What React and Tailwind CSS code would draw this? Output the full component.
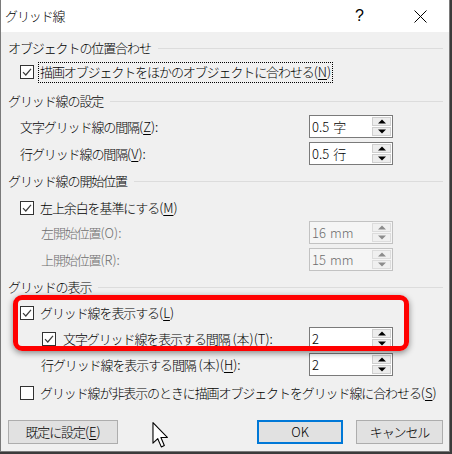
import React from "react";

const FONT = { fontFamily: '"Noto Sans CJK JP", "Noto Sans", sans-serif' };

function Check({ checked = true }) {
  return (
    <div className="w-[14px] h-[14px] border border-[#333333] bg-white flex items-center justify-center shrink-0">
      {checked && (
        <svg width="10" height="10" viewBox="0 0 10 10">
          <path d="M1 5.2 L3.8 8 L9 1.8" fill="none" stroke="#3c3c3c" strokeWidth="1.2" />
        </svg>
      )}
    </div>
  );
}

function Arrow({ up, color }) {
  return (
    <svg width="8" height="5" viewBox="0 0 8 5">
      {up ? <path d="M0 4.5 L4 0.5 L8 4.5 Z" fill={color} /> : <path d="M0 0.5 L4 4.5 L8 0.5 Z" fill={color} />}
    </svg>
  );
}

function Spin({ value, unit, disabled = false }) {
  const btn =
    "flex-1 flex items-center justify-center border " +
    (disabled ? "bg-[#f0f0f0] border-[#dcdcdc]" : "bg-[#ededed] border-[#cfcfcf]");
  return (
    <div
      className={
        "w-[84px] h-[23px] border flex shrink-0 " +
        (disabled ? "border-[#c2c2c2] bg-[#f5f5f5] text-[#6d6d6d]" : "border-[#7a7a7a] bg-white text-black")
      }
    >
      <div className="flex-1 pl-[2px] flex items-center whitespace-pre text-[13px] tracking-normal">
        <span>{value}</span>
        {unit && <span className="ml-[4px]">{unit}</span>}
      </div>
      <div className="w-[20px] flex flex-col py-[1px] pr-[1px] gap-[1px]">
        <div className={btn}>
          <Arrow up color={disabled ? "#8c8c8c" : "#000"} />
        </div>
        <div className={btn}>
          <Arrow color={disabled ? "#8c8c8c" : "#000"} />
        </div>
      </div>
    </div>
  );
}

function Section({ title, mt }) {
  return (
    <div className={"h-[22px] flex items-center pl-[7px] pr-[6px] " + mt}>
      <span>{title}</span>
      <div className="flex-1 h-px bg-[#dcdcdc] ml-[7px]" />
    </div>
  );
}

function A({ k, colon = false }) {
  return (
    <span className="tracking-normal">
      (<span className="underline underline-offset-[2px]">{k}</span>){colon ? ":" : ""}
    </span>
  );
}

function L({ children }) {
  return <span className="tracking-normal">{children}</span>;
}

export default function App() {
  return (
    <div className="w-[452px] h-[454px] bg-[#3b3b3b] overflow-hidden text-[13px] tracking-[-1.1px] text-black font-light" style={FONT}>
      <div className="relative w-[450px] h-[452px] border-x border-b border-[#7a7a7a] bg-[#f0f0f0] flex flex-col">
        {/* title bar */}
        <div className="h-[32px] bg-white flex items-center shrink-0">
          <span className="pl-[4px] text-[13px]">グリッド線</span>
          <span className="ml-auto text-[16px] tracking-normal mr-[50px]" style={{ fontFamily: '"Liberation Sans", sans-serif' }}>?</span>
          <svg width="13" height="13" viewBox="0 0 13 13" className="mr-[22px]">
            <path d="M0.5 0.5 L12.5 12.5 M12.5 0.5 L0.5 12.5" stroke="#000" strokeWidth="1" />
          </svg>
        </div>

        <Section title="オブジェクトの位置合わせ" mt="mt-[5px]" />
        <div className="h-[22px] mt-[2px] flex items-center pl-[19px]">
          <Check />
          <div className="ml-[4px] h-[21px] border border-dotted border-black px-[1px] flex items-center">
            描画オブジェクトをほかのオブジェクトに合わせる<A k="N" />
          </div>
        </div>

        <Section title="グリッド線の設定" mt="mt-[7px]" />
        <div className="h-[23px] mt-[3px] flex items-center pl-[19px] pr-[56px]">
          <span className="flex-1">文字グリッド線の間隔<A k="Z" colon /></span>
          <Spin value="0.5" unit="字" />
        </div>
        <div className="h-[23px] mt-[4px] flex items-center pl-[19px] pr-[56px]">
          <span className="flex-1">行グリッド線の間隔<A k="V" colon /></span>
          <Spin value="0.5" unit="行" />
        </div>

        <Section title="グリッド線の開始位置" mt="mt-[5px]" />
        <div className="h-[22px] mt-[5px] flex items-center pl-[19px]">
          <Check />
          <span className="ml-[6px]">左上余白を基準にする<A k="M" /></span>
        </div>
        <div className="h-[23px] mt-[2px] flex items-center pl-[40px] pr-[56px] text-[#6d6d6d]">
          <span className="flex-1">左開始位置<L>(O):</L></span>
          <Spin value="16" unit="mm" disabled />
        </div>
        <div className="h-[23px] mt-[4px] flex items-center pl-[40px] pr-[56px] text-[#6d6d6d]">
          <span className="flex-1">上開始位置<L>(R):</L></span>
          <Spin value="15" unit="mm" disabled />
        </div>

        <Section title="グリッドの表示" mt="mt-[5px]" />
        <div className="h-[22px] mt-[4px] flex items-center pl-[19px]">
          <Check />
          <span className="ml-[6px]">グリッド線を表示する<A k="L" /></span>
        </div>
        <div className="h-[23px] mt-[3px] flex items-center pl-[41px] pr-[56px]">
          <Check />
          <span className="ml-[7px] flex-1">文字グリッド線を表示する間隔<L> (本)</L><A k="T" colon /></span>
          <Spin value="2" />
        </div>
        <div className="h-[23px] mt-[3px] flex items-center pl-[40px] pr-[56px]">
          <span className="flex-1">行グリッド線を表示する間隔<L> (本)</L><A k="H" colon /></span>
          <Spin value="2" />
        </div>
        <div className="h-[22px] mt-[6px] flex items-center pl-[19px]">
          <Check checked={false} />
          <span className="ml-[6px] whitespace-nowrap">グリッド線が非表示のときに描画オブジェクトをグリッド線に合わせる<A k="S" /></span>
        </div>

        <div className="h-[24px] mt-[16px] flex items-center pl-[7px] pr-[6px]">
          <div className="w-[110px] h-[24px] bg-[#e1e1e1] border border-[#adadad] flex items-center justify-center">
            既定に設定<A k="E" />
          </div>
          <div className="ml-auto w-[86px] h-[24px] bg-[#e1e1e1] border-2 border-[#0078d7] flex items-center justify-center tracking-normal">
            OK
          </div>
          <div className="ml-[13px] w-[87px] h-[24px] bg-[#e1e1e1] border border-[#adadad] flex items-center justify-center">
            キャンセル
          </div>
        </div>

        {/* red annotation */}
        <div className="absolute left-[12px] top-[295px] w-[396px] h-[56px] border-[5px] border-[#ff0000] rounded-[9px] shadow-[0_2px_6px_rgba(0,0,0,0.45)] pointer-events-none" />

        {/* cursor */}
        <svg className="absolute left-[151px] top-[422px]" width="17" height="26" viewBox="0 0 12 19">
          <path d="M0.5 0.5 L0.5 15.5 L4 12.2 L6.6 18.2 L8.8 17.2 L6.3 11.3 L11 11.3 Z" fill="#fff" stroke="#000" strokeWidth="0.8" strokeLinejoin="round" />
        </svg>
      </div>
    </div>
  );
}
